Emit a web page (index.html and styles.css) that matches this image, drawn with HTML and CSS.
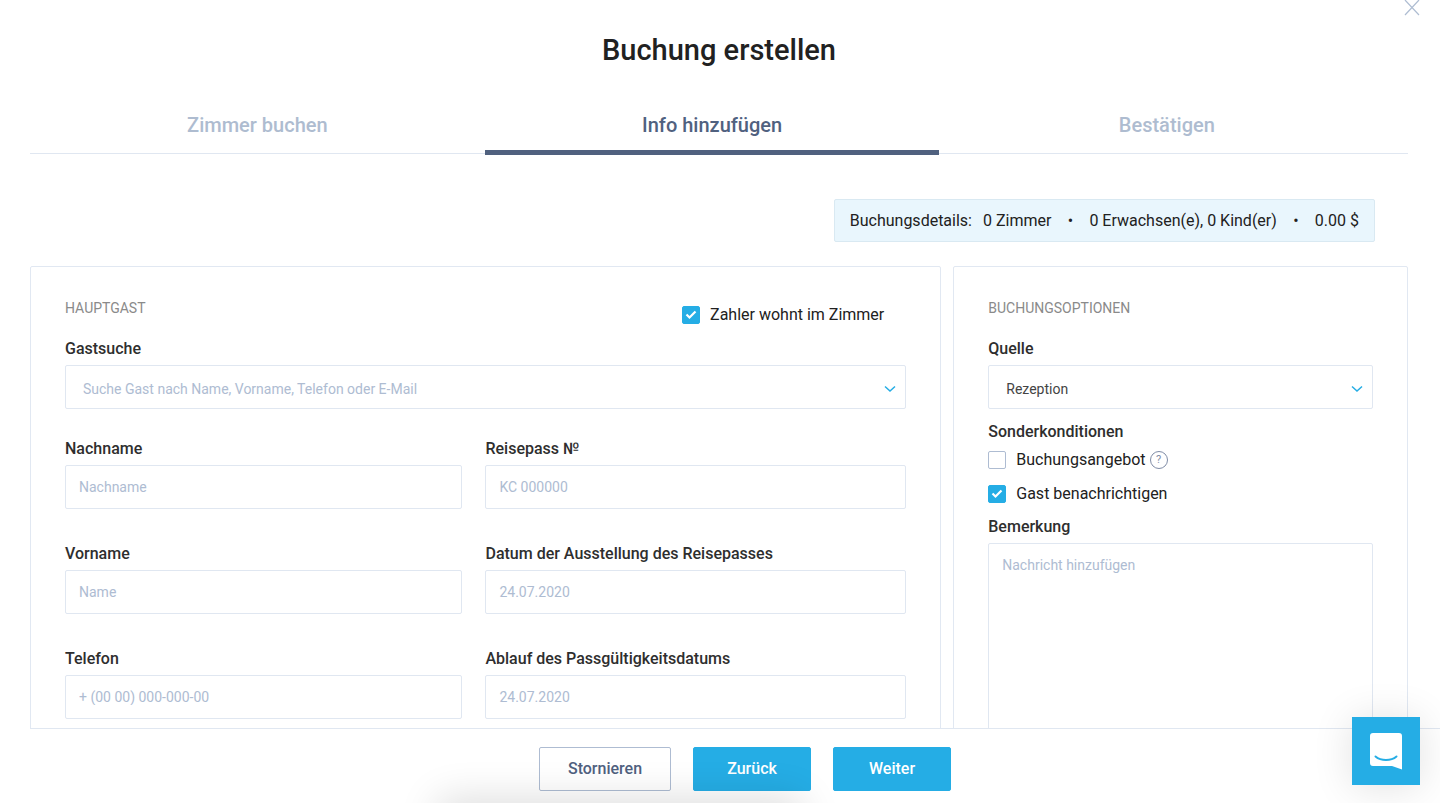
FILE: index.html
```html
<!DOCTYPE html>
<html lang="de">
<head>
<meta charset="utf-8">
<meta name="viewport" content="width=device-width, initial-scale=1">
<title>Buchung erstellen</title>
<link rel="stylesheet" href="styles.css">
</head>
<body>
<div class="dialog">
  <button class="close" type="button" aria-label="Schließen">
    <svg viewBox="0 0 16 16" width="16" height="16" fill="none" stroke="currentColor" stroke-width="1.200"><path d="M1 0l14 15M15 0L1 15"/></svg>
  </button>
  <form class="content" id="booking">
    <h1 class="title">Buchung erstellen</h1>
    <nav class="tabs">
      <a class="tab" href="#rooms">Zimmer buchen</a>
      <a class="tab tab-active" href="#info" aria-current="step">Info hinzufügen</a>
      <a class="tab" href="#confirm">Bestätigen</a>
    </nav>
    <div class="summary">
      <span>Buchungsdetails:</span>
      <span class="summary-rooms">0 Zimmer</span>
      <span class="dot">•</span>
      <span>0 Erwachsen(e), 0 Kind(er)</span>
      <span class="dot">•</span>
      <span>0.00 $</span>
    </div>
    <div class="columns">
      <section class="card card-main">
        <header class="card-head">
          <h2 class="card-title">Hauptgast</h2>
          <label class="check check-payer"><input class="check-box" type="checkbox" checked>Zahler wohnt im Zimmer</label>
        </header>
        <div class="field">
          <label class="label" for="search">Gastsuche</label>
          <div class="picker">
            <input class="input input-picker" id="search" type="text" role="combobox" aria-expanded="false" placeholder="Suche Gast nach Name, Vorname, Telefon oder E-Mail">
            <svg class="chevron" viewBox="0 0 12 8" width="12" height="8" fill="none" stroke="currentColor" stroke-width="1.500"><path d="M1 1.500l5 4.500 5-4.500"/></svg>
          </div>
        </div>
        <div class="grid">
          <div class="field">
            <label class="label" for="surname">Nachname</label>
            <input class="input" id="surname" type="text" placeholder="Nachname">
          </div>
          <div class="field">
            <label class="label" for="passport">Reisepass №</label>
            <input class="input" id="passport" type="text" placeholder="KC 000000">
          </div>
          <div class="field">
            <label class="label" for="name">Vorname</label>
            <input class="input" id="name" type="text" placeholder="Name">
          </div>
          <div class="field">
            <label class="label" for="issued">Datum der Ausstellung des Reisepasses</label>
            <input class="input" id="issued" type="text" placeholder="24.07.2020">
          </div>
          <div class="field">
            <label class="label" for="phone">Telefon</label>
            <input class="input" id="phone" type="tel" placeholder="+ (00 00) 000-000-00">
          </div>
          <div class="field">
            <label class="label" for="expires">Ablauf des Passgültigkeitsdatums</label>
            <input class="input" id="expires" type="text" placeholder="24.07.2020">
          </div>
        </div>
      </section>
      <section class="card card-side">
        <header class="card-head">
          <h2 class="card-title">Buchungsoptionen</h2>
        </header>
        <div class="field">
          <label class="label" for="source">Quelle</label>
          <div class="picker">
            <select class="input input-picker" id="source"><option>Rezeption</option></select>
            <svg class="chevron" viewBox="0 0 12 8" width="12" height="8" fill="none" stroke="currentColor" stroke-width="1.500"><path d="M1 1.500l5 4.500 5-4.500"/></svg>
          </div>
        </div>
        <fieldset class="options">
          <legend class="label">Sonderkonditionen</legend>
          <div class="checks">
            <div class="check-row">
              <label class="check"><input class="check-box" type="checkbox">Buchungsangebot</label>
              <button class="help" type="button" aria-label="Hilfe">?</button>
            </div>
            <label class="check"><input class="check-box" type="checkbox" checked>Gast benachrichtigen</label>
          </div>
        </fieldset>
        <div class="field">
          <label class="label" for="note">Bemerkung</label>
          <textarea class="input note" id="note" placeholder="Nachricht hinzufügen"></textarea>
        </div>
      </section>
    </div>
  </form>
  <footer class="footer">
    <button class="btn btn-outline" type="button">Stornieren</button>
    <button class="btn btn-primary" type="button">Zurück</button>
    <button class="btn btn-primary" type="submit" form="booking">Weiter</button>
  </footer>
</div>
<button class="chat" type="button" aria-label="Chat öffnen">
  <svg viewBox="0 0 32 37" width="32" height="37"><path d="M3 0h26a3 3 0 0 1 3 3v33.500L22 33H3a3 3 0 0 1-3-3V3a3 3 0 0 1 3-3z" fill="#fff"/><path d="M5.500 23.500c5.500 4.700 15.500 4.700 21 0" fill="none" stroke="#25ade5" stroke-width="2" stroke-linecap="round"/></svg>
</button>
</body>
</html>
```
FILE: styles.css
```css
* {
  box-sizing: border-box;
}

body {
  margin: 0;
  overflow: hidden;
  background: #fff;
  color: #212121;
  font: 16px/20px Roboto, "Liberation Sans", sans-serif;
}

button, input, select, textarea {
  font: inherit;
  color: inherit;
}

button {
  cursor: pointer;
}

.dialog {
  position: relative;
  display: flex;
  flex-direction: column;
  height: 100vh;
}

.close {
  position: absolute;
  top: 0;
  right: 20px;
  display: flex;
  padding: 0;
  border: 0;
  background: none;
  color: #aebdd2;
}

.content {
  flex: 1;
  min-height: 0;
  overflow: hidden;
  padding: 32px 32px 0 30px;
}

.title {
  margin: 0;
  font-size: 29px;
  line-height: 36px;
  font-weight: 500;
  text-align: center;
}

.tabs {
  display: flex;
  height: 55px;
  margin-top: 31px;
  border-bottom: 1px solid #e0e7f1;
}

.tab {
  width: 33%;
  height: 56px;
  padding-top: 14px;
  color: #aebcd0;
  font-size: 20px;
  line-height: 24px;
  font-weight: 500;
  text-align: center;
  text-decoration: none;
}

.tab-active {
  border-bottom: 5px solid #50617f;
  color: #50617f;
}

.summary {
  display: flex;
  align-items: center;
  width: fit-content;
  height: 43px;
  margin: 45px 33px 24px auto;
  padding: 0 15px;
  border: 1px solid #d9e9f2;
  border-radius: 2px;
  background: #e9f6fd;
}

.summary-rooms {
  margin-left: 11px;
}

.dot {
  width: 38px;
  text-align: center;
}

.columns {
  display: flex;
  gap: 12px;
}

.card {
  padding: 31px 34px;
  border: 1px solid #e1e8f2;
  border-radius: 2px;
}

.card-main {
  flex: 1;
}

.card-side {
  flex: 0 0 33%;
}

.card-head {
  display: flex;
  justify-content: space-between;
  height: 41px;
}

.card-title {
  margin: 0;
  color: #8a8a8a;
  font-size: 14px;
  line-height: 20px;
  font-weight: 400;
  text-transform: uppercase;
}

.field {
  display: flex;
  flex-direction: column;
  gap: 6px;
  min-width: 0;
}

.label {
  padding: 0;
  color: #2e2e2e;
  font-weight: 500;
}

.input {
  width: 100%;
  height: 44px;
  padding: 0 13px;
  border: 1px solid #e0e7f1;
  border-radius: 2px;
  outline: 0;
  background: #fff;
  font-size: 14px;
}

.input::placeholder {
  color: #aebcd2;
  opacity: 1;
}

.picker {
  position: relative;
}

.input-picker {
  padding: 3px 40px 0 17px;
  appearance: none;
  color: #444;
}

.chevron {
  position: absolute;
  top: 20px;
  right: 10px;
  color: #25ade5;
  pointer-events: none;
}

.grid {
  display: grid;
  grid-template-columns: 17fr 18fr;
  gap: 35px 23px;
  margin-top: 30px;
}

.check {
  display: flex;
  align-items: center;
  gap: 10px;
  height: 20px;
}

.check-payer {
  margin: 7px 22px 0 0;
}

.check-box {
  width: 18px;
  height: 18px;
  margin: 0;
  border: 1px solid #aebcd2;
  border-radius: 2px;
  appearance: none;
}

.check-box:checked {
  border-color: #25ade5;
  background: #25ade5 url("data:image/svg+xml,%3Csvg xmlns='http://www.w3.org/2000/svg' viewBox='0 0 16 16'%3E%3Cpath d='M3.500 7.500l3 3L12.500 4.500' fill='none' stroke='white' stroke-width='2.200'/%3E%3C/svg%3E") center / 16px 16px no-repeat;
}

.check-row {
  display: flex;
  gap: 4px;
}

.help {
  display: grid;
  place-items: center;
  width: 18px;
  height: 18px;
  margin-top: 1px;
  padding: 0;
  border: 1px solid #7f8ca6;
  border-radius: 50%;
  background: none;
  color: #7f8ca6;
  font-size: 11px;
  line-height: 16px;
}

.options {
  margin: 13px 0;
  padding: 0;
  border: 0;
}

.checks {
  display: flex;
  flex-direction: column;
  gap: 14px;
  padding-top: 8px;
}

.note {
  height: 220px;
  padding: 11px 13px;
  resize: none;
}

.footer {
  position: relative;
  display: flex;
  justify-content: center;
  gap: 22px;
  margin-left: 30px;
  padding: 18px 0 12px 20px;
  border-top: 1px solid #e0e7f1;
}

.footer::after {
  content: "";
  position: absolute;
  top: 100%;
  left: 420px;
  width: 340px;
  height: 20px;
  box-shadow: 0 8px 40px 12px rgba(0, 0, 0, 0.14);
  pointer-events: none;
}

.btn {
  min-width: 118px;
  height: 44px;
  padding: 0 28px;
  border: 1px solid #25ade5;
  border-radius: 2px;
  font-weight: 500;
}

.btn-primary {
  background: #25ade5;
  color: #fff;
}

.btn-outline {
  border-color: #aebcd2;
  background: #fff;
  color: #50617f;
}

.chat {
  position: fixed;
  right: 20px;
  bottom: 18px;
  display: grid;
  place-items: center;
  width: 68px;
  height: 68px;
  padding: 0;
  border: 0;
  background: #25ade5;
  box-shadow: 0 2px 40px rgba(0, 0, 0, 0.12);
}
```
